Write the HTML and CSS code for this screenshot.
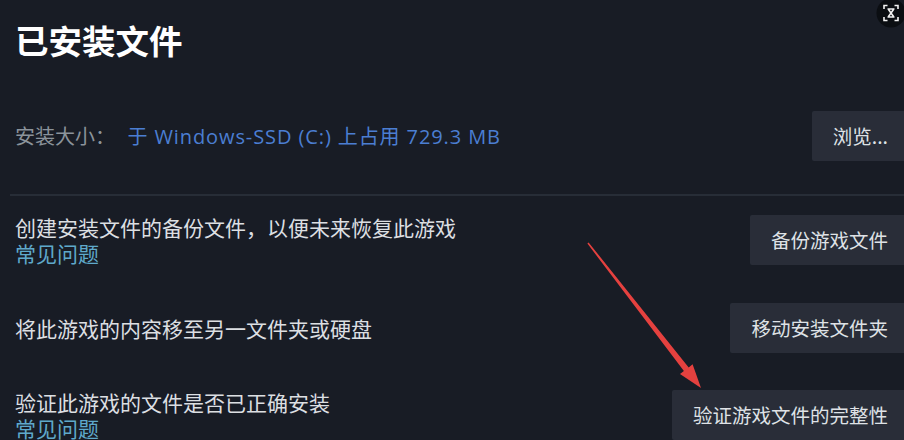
FILE: index.html
```html
<!DOCTYPE html>
<html lang="zh-CN">
<head>
<meta charset="utf-8">
<title>已安装文件</title>
<link rel="stylesheet" href="styles.css">
</head>
<body>
<div class="page">
  <h1 class="title">已安装文件</h1>

  <div class="row row-size">
    <div class="size-text">
      <span class="size-label">安装大小：</span>
      <span class="size-value">于 Windows-SSD (C:) 上占用 729.3 MB</span>
    </div>
    <button class="btn">浏览...</button>
  </div>

  <div class="sep"></div>

  <div class="row row-backup">
    <div class="desc">
      <div class="desc-line">创建安装文件的备份文件，以便未来恢复此游戏</div>
      <a class="faq">常见问题</a>
    </div>
    <button class="btn">备份游戏文件</button>
  </div>

  <div class="row row-move">
    <div class="desc">
      <div class="desc-line">将此游戏的内容移至另一文件夹或硬盘</div>
    </div>
    <button class="btn">移动安装文件夹</button>
  </div>

  <div class="row row-verify">
    <div class="desc">
      <div class="desc-line">验证此游戏的文件是否已正确安装</div>
      <a class="faq">常见问题</a>
    </div>
    <button class="btn">验证游戏文件的完整性</button>
  </div>
</div>

<div class="corner-badge">
  <svg width="30" height="30" viewBox="0 0 30 30">
    <circle cx="15" cy="15" r="14.5" fill="#0b0e12"/>
    <g fill="none" stroke="#f2f2f2" stroke-width="1.6">
      <path d="M8 11V7.5h3.5M18.5 7.5H22V11M22 19v3.5h-3.5M11.5 22.5H8V19"/>
      <path d="M11.5 11h7M11.5 19h7M12.5 11.5l5 7M17.5 11.5l-5 7"/>
    </g>
  </svg>
</div>

<svg class="arrow" width="904" height="440" viewBox="0 0 904 440">
  <polygon fill="#e5413f" points="587.4,243.5 588.6,242.5 688.7,367.4 692.6,364.3 701,388 680,374.1 683.9,371"/>
</svg>
</body>
</html>
```

FILE: styles.css
```css
html, body {
  margin: 0;
  padding: 0;
}
body {
  background: #181c25;
  width: 904px;
  height: 440px;
  overflow: hidden;
  position: relative;
  font-family: "Noto Sans CJK SC", "Noto Sans", sans-serif;
  color: #dcdfe2;
}
.page {
  width: 894px;
  padding: 16px 0 0 15px;
  display: flex;
  flex-direction: column;
}
.title {
  margin: 0;
  font-size: 33.5px;
  line-height: 48px;
  font-weight: 700;
  color: #ffffff;
}
.row {
  display: flex;
  align-items: center;
  justify-content: space-between;
}
.row-size {
  margin-top: 47px;
}
.size-text {
  font-size: 20px;
  line-height: 26px;
}
.size-label {
  color: #8b939b;
  margin-right: 8px;
}
.size-value {
  color: #4b7ed2;
  font-family: "Open Sans", "Noto Sans CJK SC", sans-serif;
  letter-spacing: 0.9px;
}
.btn {
  height: 50px;
  padding: 0 21px;
  border: none;
  border-radius: 2px 0 0 2px;
  background: #292d38;
  color: #dfe2e6;
  font-family: "Noto Sans CJK SC", "Noto Sans", sans-serif;
  font-size: 19.5px;
  line-height: 50px;
  white-space: nowrap;
}
.sep {
  height: 2px;
  margin: 33px -10px 0 -5px;
  background: #272d37;
}
.row-backup {
  margin-top: 18px;
}
.row-move {
  margin-top: 37px;
}
.row-verify {
  margin-top: 36px;
}
.desc {
  display: flex;
  flex-direction: column;
  font-size: 21px;
  line-height: 26px;
}
.desc-line {
  color: #dcdfe2;
}
.faq {
  color: #5fa9cb;
  text-decoration: none;
}
.corner-badge {
  position: absolute;
  top: -2px;
  left: 876px;
  width: 30px;
  height: 30px;
}
.corner-badge svg {
  display: block;
}
.arrow {
  position: absolute;
  left: 0;
  top: 0;
  pointer-events: none;
}
```
